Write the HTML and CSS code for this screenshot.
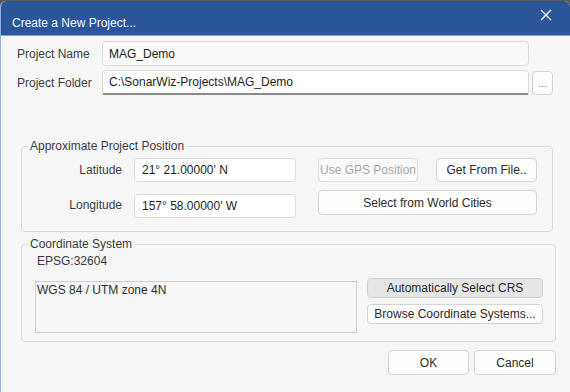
FILE: index.html
```html
<!DOCTYPE html>
<html>
<head>
<meta charset="utf-8">
<link rel="stylesheet" href="styles.css">
</head>
<body>
<div class="dialog">
  <div class="titlebar">
    <span class="title">Create a New Project...</span>
    <svg class="close" width="12" height="12" viewBox="0 0 12 12"><path d="M1 1L11 11M11 1L1 11" stroke="#fff" stroke-width="1.3" fill="none"/></svg>
  </div>
  <div class="content">
    <div class="top-grid">
      <label class="lbl">Project Name</label>
      <div class="input readonly">MAG_Demo</div>
      <span></span>
      <label class="lbl">Project Folder</label>
      <div class="input focused">C:\SonarWiz-Projects\MAG_Demo</div>
      <button class="btn dots">...</button>
    </div>

    <fieldset class="group pos">
      <legend>Approximate Project Position</legend>
      <div class="pos-grid">
        <label class="lbl right">Latitude</label>
        <div class="input small">21° 21.00000' N</div>
        <button class="btn gps" disabled>Use GPS Position</button>
        <button class="btn file">Get From File..</button>
        <label class="lbl right lon">Longitude</label>
        <div class="input small lon">157° 58.00000' W</div>
        <button class="btn cities">Select from World Cities</button>
      </div>
    </fieldset>

    <fieldset class="group crs">
      <legend>Coordinate System</legend>
      <div class="crs-grid">
        <div class="epsg">EPSG:32604</div>
        <div class="crs-box">WGS 84 / UTM zone 4N</div>
        <div class="crs-btns">
          <button class="btn auto">Automatically Select CRS</button>
          <button class="btn browse">Browse Coordinate Systems...</button>
        </div>
      </div>
    </fieldset>

    <div class="footer">
      <button class="btn ok">OK</button>
      <button class="btn cancel">Cancel</button>
    </div>
  </div>
</div>
</body>
</html>
```
FILE: styles.css
```css
html, body {
  margin: 0;
  padding: 0;
  background: #5b5b5b;
}
body {
  width: 570px;
  height: 392px;
  overflow: hidden;
  font-family: "Liberation Sans", Arial, sans-serif;
  font-size: 12px;
  color: #3a3a3a;
}
.dialog {
  margin-top: 1px;
  height: 391px;
  background: #f6f6f6;
  border-radius: 6px 6px 0 0;
  border-left: 1px solid #8db3e6;
  box-sizing: border-box;
  overflow: hidden;
}
.titlebar {
  height: 34px;
  background: #2b579a;
  border-bottom: 1px solid #7f9fcf;
  display: flex;
  align-items: center;
  justify-content: space-between;
  padding: 0 18px 0 11px;
  box-sizing: content-box;
}
.title {
  color: #f4f6fa;
  font-size: 12px;
  margin-top: 9px;
}
.close {
  margin-top: -7px;
}
.content {
  padding: 5px 0 0 0;
}
.top-grid {
  display: grid;
  grid-template-columns: 82px 427px 21px;
  column-gap: 3px;
  row-gap: 4px;
  margin-left: 16px;
}
.lbl {
  display: flex;
  align-items: center;
  color: #3c3c3c;
}
.input {
  height: 25px;
  box-sizing: border-box;
  border: 1px solid #dcdcdc;
  border-radius: 4px;
  background: #fff;
  display: flex;
  align-items: center;
  padding-left: 6px;
  color: #1e1e1e;
}
.input.readonly {
  background: #fafafa;
}
.input.focused {
  border-bottom: 2px solid #8a8a8a;
  border-radius: 4px 4px 2px 2px;
}
.btn {
  font-family: inherit;
  font-size: 12px;
  color: #2b2b2b;
  background: #fdfdfd;
  border: 1px solid #d4d4d4;
  border-radius: 4px;
  padding: 0;
  height: 25px;
  box-sizing: border-box;
}
.btn.dots {
  color: #8a8a8a;
  height: 24px;
  margin-top: 1px;
  font-size: 11px;
}
.group {
  margin: 0;
  border: 1px solid #dadada;
  border-radius: 4px;
  padding: 0;
  min-inline-size: 0;
}
.group legend {
  margin-left: 6px;
  padding: 0 3px 0 2px;
  color: #3c3c3c;
  line-height: 15px;
}
.pos {
  margin: 44px 0 0 20px;
  width: 532px;
  box-sizing: border-box;
  height: 93px;
}
.pos-grid {
  display: grid;
  grid-template-columns: 112px 184px 118px 101px;
  grid-template-rows: 24px 25px;
  row-gap: 8px;
  margin: 4px 0 0 0;
}
.lbl.right {
  justify-content: flex-end;
  padding-right: 12px;
}
.input.small {
  width: 162px;
  height: 24px;
  padding-left: 7px;
}
.lbl.lon, .input.lon {
  margin-top: 4px;
}
.btn.gps {
  width: 100px;
  height: 24px;
  color: #a8a8a8;
  background: #f9f9f9;
  border-color: #dedede;
}
.btn.file {
  width: 101px;
  height: 24px;
}
.btn.cities {
  grid-column: 3 / 5;
  width: 219px;
}
.crs {
  margin: 5px 0 0 20px;
  width: 535px;
  box-sizing: border-box;
  height: 105px;
}
.crs-grid {
  display: grid;
  grid-template-columns: 322px 176px;
  column-gap: 10px;
  grid-template-rows: 16px 54px;
  margin: 2px 0 0 13px;
}
.epsg {
  padding-left: 2px;
  color: #3a3a3a;
}
.crs-box {
  grid-row: 2;
  margin-top: 11px;
  border: 1px solid #cfcfcf;
  background: #f6f6f6;
  height: 52px;
  box-sizing: border-box;
  padding: 1px 0 0 1px;
  color: #2e2e2e;
}
.crs-btns {
  grid-row: 2;
  grid-column: 2;
  margin-top: 8px;
  display: flex;
  flex-direction: column;
  gap: 6px;
}
.btn.auto {
  background: #e6e6e6;
  border-color: #d0d0d0;
  height: 24px;
}
.btn.browse {
  height: 24px;
}
.footer {
  display: flex;
  justify-content: flex-end;
  gap: 5px;
  margin: 8px 14px 0 0;
}
.btn.ok {
  width: 81px;
}
.btn.cancel {
  width: 82px;
}
```
